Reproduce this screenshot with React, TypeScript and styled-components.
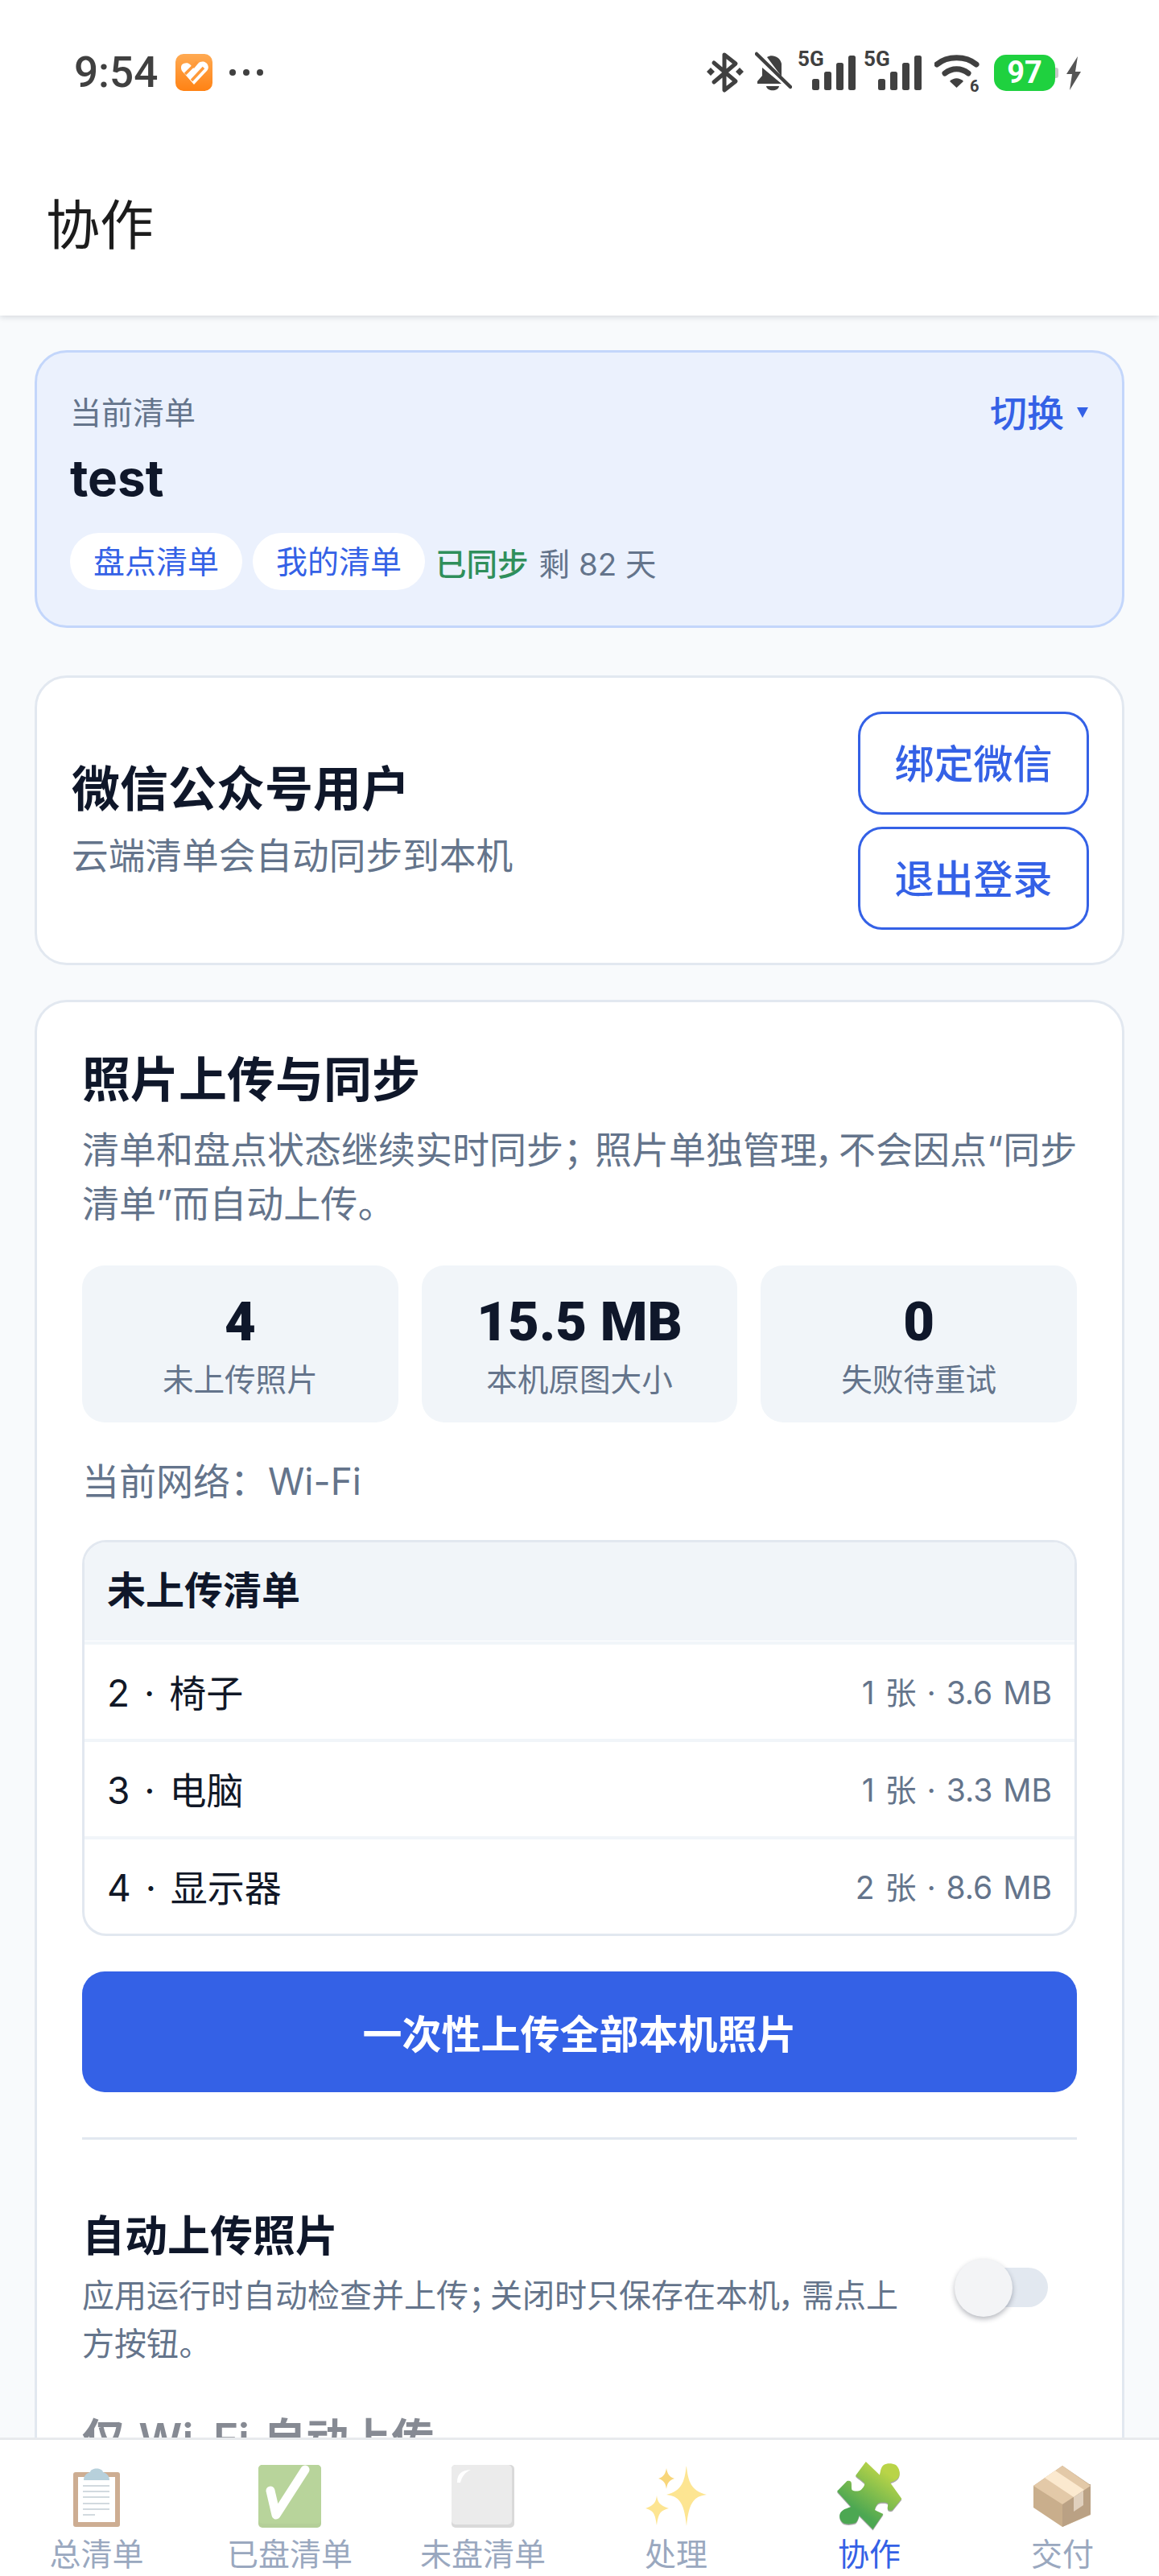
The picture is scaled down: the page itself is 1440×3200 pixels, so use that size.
import React from 'react'
import styled, { createGlobalStyle } from 'styled-components'

const GlobalStyle = createGlobalStyle`
  html, body { margin: 0; padding: 0; background: #fff; }
  * { box-sizing: border-box; }
  body {
    font-family: Inter, "Noto Sans CJK SC", sans-serif;
    font-feature-settings: "palt";
  }
`

const BLUE = '#3461e6'
const INK = '#0f172a'
const SLATE = '#64748b'
const LINE = '#e2e8f0'

const Screen = styled.div`
  width: 1440px;
  height: 3200px;
  display: flex;
  flex-direction: column;
  overflow: hidden;
  background: #f8fafc;
`

const TopArea = styled.header`
  height: 392px;
  flex: none;
  background: #fff;
  box-shadow: 0 2px 7px rgba(15, 23, 42, 0.14);
  position: relative;
  z-index: 2;
`

const StatusBar = styled.div`
  height: 232px;
  padding: 60px 96px 0 92px;
  display: flex;
  justify-content: space-between;
  align-items: flex-start;
  color: #404040;
`

const StatusLeft = styled.div`
  display: flex;
  align-items: center;
  height: 60px;
`

const Clock = styled.span`
  font-family: Roboto, sans-serif;
  font-size: 53px;
  line-height: 60px;
  font-weight: 500;
  width: 126px;
`

const MoreDots = styled.div`
  display: flex;
  gap: 9px;
  margin-left: 21px;
  span {
    width: 8px;
    height: 8px;
    border-radius: 50%;
    background: #404040;
  }
`

const StatusRight = styled.div`
  display: flex;
  align-items: flex-start;
  height: 60px;
`

const StatusSvg = styled.svg<{ $left?: number; $top?: number }>`
  flex: none;
  margin-left: ${p => p.$left ?? 0}px;
  margin-top: ${p => p.$top ?? 0}px;
`

const Battery = styled.div`
  width: 76px;
  height: 45px;
  margin: 8px 0 0 16px;
  border-radius: 15px;
  background: #1fd13f;
  color: #fff;
  font-family: Roboto, sans-serif;
  font-weight: 700;
  font-size: 38px;
  line-height: 45px;
  text-align: center;
  position: relative;
  &::after {
    content: '';
    position: absolute;
    right: -4px;
    top: 16px;
    width: 4px;
    height: 13px;
    border-radius: 0 3px 3px 0;
    background: #c8c8c8;
  }
`

const PageTitle = styled.h1`
  margin: 0;
  padding-left: 57px;
  font-size: 67px;
  line-height: 96px;
  font-weight: 400;
  color: #1c1c1c;
`

const Main = styled.main`
  flex: 1;
  min-height: 0;
  overflow: hidden;
  padding: 43px 43px 0;
  display: flex;
  flex-direction: column;
`

const ListCard = styled.section`
  flex: none;
  height: 345px;
  padding: 42px 41px 0;
  border: 3px solid #c3d6fb;
  border-radius: 40px;
  background: #ebf1fd;
`

const ListCardTop = styled.div`
  display: flex;
  justify-content: space-between;
  align-items: center;
  height: 60px;
`

const MutedLabel = styled.span`
  font-size: 39px;
  color: ${SLATE};
`

const SwitchLink = styled.span`
  display: flex;
  align-items: center;
  gap: 16px;
  margin-right: 1px;
  font-size: 46px;
  font-weight: 500;
  color: ${BLUE};
  i {
    width: 0;
    height: 0;
    margin-top: 4px;
    border-style: solid;
    border-width: 13px 7px 0;
    border-color: ${BLUE} transparent transparent;
  }
`

const ListName = styled.div`
  margin-top: 15px;
  font-size: 62px;
  line-height: 78px;
  font-weight: 700;
  color: ${INK};
`

const TagRow = styled.div`
  margin-top: 29px;
  display: flex;
  align-items: center;
  gap: 13px;
`

const Pill = styled.span`
  height: 71px;
  line-height: 71px;
  padding: 0 29px;
  border-radius: 36px;
  background: #fff;
  font-size: 39px;
  color: ${BLUE};
`

const SyncState = styled.span`
  font-size: 38.500px;
  font-weight: 500;
  color: #2f8f5b;
`

const DaysLeft = styled.span`
  font-size: 38.500px;
  color: ${SLATE};
`

const Card = styled.section`
  flex: none;
  background: #fff;
  border: 3px solid ${LINE};
  border-radius: 40px;
`

const AccountCard = styled(Card)`
  height: 360px;
  margin-top: 59px;
  padding: 42px 41px 0 43px;
  display: flex;
  justify-content: space-between;
`

const AccountText = styled.div`
  padding-top: 58px;
`

const AccountName = styled.div`
  font-size: 60px;
  line-height: 76px;
  font-weight: 600;
  color: ${INK};
`

const AccountHint = styled.div`
  margin-top: 16px;
  font-size: 45.700px;
  line-height: 60px;
  color: ${SLATE};
`

const ButtonStack = styled.div`
  display: flex;
  flex-direction: column;
  gap: 15px;
`

const OutlineButton = styled.button`
  width: 287px;
  height: 128px;
  padding: 0 0 6px;
  border: 3px solid ${BLUE};
  border-radius: 30px;
  background: #fff;
  color: ${BLUE};
  font: inherit;
  font-size: 49px;
  font-weight: 500;
`

const PhotoCard = styled(Card)`
  margin-top: 43px;
  padding: 58px 56px 0;
  border-bottom: 0;
  border-radius: 40px 40px 0 0;
  flex: 1;
  overflow: hidden;
`

const SectionTitle = styled.h2`
  margin: 0;
  font-size: 60px;
  line-height: 76px;
  font-weight: 600;
  color: ${INK};
`

const SectionText = styled.p`
  margin: 16px 0 0;
  font-size: 46px;
  line-height: 67px;
  white-space: nowrap;
  color: ${SLATE};
`

/* punctuation in the reference sits wider than proportional CJK marks */
const Mark = styled.span<{ $extra: number }>`
  padding-right: ${p => p.$extra}px;
`

const StatGrid = styled.div`
  margin-top: 43px;
  display: grid;
  grid-template-columns: repeat(3, 1fr);
  gap: 29px;
`

const StatBox = styled.div`
  height: 195px;
  border-radius: 28px;
  background: #f1f5f9;
  text-align: center;
  padding-top: 32px;
`

const StatValue = styled.div`
  font-family: Roboto, sans-serif;
  font-size: 67px;
  line-height: 76px;
  font-weight: 900;
  color: ${INK};
`

const StatLabel = styled.div`
  margin-top: 6px;
  font-size: 38.600px;
  line-height: 56px;
  color: ${SLATE};
`

const NetworkLine = styled.div`
  margin-top: 40px;
  font-size: 46px;
  line-height: 66px;
  color: ${SLATE};
`

const PendingTable = styled.div`
  margin-top: 40px;
  border: 3px solid ${LINE};
  border-radius: 30px;
  overflow: hidden;
`

const PendingHead = styled.div`
  height: 122px;
  margin-bottom: 1px;
  line-height: 120px;
  padding-left: 28px;
  background: #f1f5f9;
  font-size: 48px;
  font-weight: 600;
  color: ${INK};
`

const PendingRow = styled.div`
  height: 121px;
  padding: 0 28px 4px;
  border-top: 4px solid #f1f5f9;
  display: flex;
  justify-content: space-between;
  align-items: center;
  font-size: 46px;
  word-spacing: 5px;
  color: #111827;
`

const PendingMeta = styled.span`
  font-size: 39px;
  word-spacing: 2px;
  color: ${SLATE};
`

const PrimaryButton = styled.button`
  display: block;
  width: 100%;
  height: 150px;
  margin-top: 44px;
  padding: 0 0 2px;
  border: 0;
  border-radius: 28px;
  background: ${BLUE};
  color: #fff;
  font: inherit;
  font-size: 49px;
  font-weight: 600;
`

const Divider = styled.hr`
  margin: 56px 0 0;
  border: 0;
  height: 3px;
  background: ${LINE};
`

const SettingRow = styled.div<{ $dim?: boolean; $top: number }>`
  margin-top: ${p => p.$top}px;
  display: flex;
  justify-content: space-between;
  align-items: center;
  opacity: ${p => (p.$dim ? 0.5 : 1)};
`

const SettingText = styled.div`
  width: 1030px;
`

const SettingTitle = styled.div`
  font-size: 53px;
  line-height: 72px;
  font-weight: 600;
  word-spacing: 4px;
  color: ${INK};
`

const SettingHint = styled.div`
  margin-top: 8px;
  font-size: 40px;
  line-height: 60px;
  white-space: nowrap;
  color: ${SLATE};
`

const Toggle = styled.div`
  width: 116px;
  height: 72px;
  margin: 0 36px 0 0;
  position: relative;
  &::before {
    content: '';
    position: absolute;
    left: 56px;
    top: 11px;
    width: 60px;
    height: 49px;
    border-radius: 0 25px 25px 0;
    background: ${LINE};
  }
  &::after {
    content: '';
    position: absolute;
    left: 0;
    top: 0;
    width: 72px;
    height: 72px;
    border-radius: 50%;
    background: #f3f4f6;
    box-shadow: 0 3px 6px rgba(15, 23, 42, 0.3);
  }
`

const TabBar = styled.nav`
  flex: none;
  height: 172px;
  border-top: 3px solid #e8eaed;
  background: #fff;
  display: grid;
  grid-template-columns: repeat(6, 1fr);
  position: relative;
  z-index: 2;
`

const Tab = styled.div<{ $active?: boolean }>`
  display: flex;
  flex-direction: column;
  align-items: center;
  padding-top: 28px;
  font-size: 39px;
  line-height: 48px;
  color: ${p => (p.$active ? BLUE : '#9aa8bf')};
`

const TabIcon = styled.div`
  height: 84px;
  margin-bottom: 6px;
  display: flex;
  align-items: center;
  justify-content: center;
`

const AppLogo = () => (
  <svg width="46" height="46" viewBox="0 0 46 46">
    <defs>
      <linearGradient id="logoFill" x1="0" y1="0" x2="0" y2="1">
        <stop offset="0" stopColor="#ffaa52" />
        <stop offset="1" stopColor="#ff8214" />
      </linearGradient>
    </defs>
    <rect width="46" height="46" rx="10" fill="url(#logoFill)" />
    <path d="M23 38 8 21c-2-4-1-8 2-9s6-1 8 1l5 5 5-6c3-3 7-3 10-1s4 7 1 10z" fill="#fff" />
    <path d="M12 25 27 10M20 33 35 17" stroke="#ff9a3a" strokeWidth="3.400" fill="none" />
  </svg>
)

const BluetoothIcon = () => (
  <StatusSvg width="46" height="52" viewBox="0 0 46 52" $top={4}>
    <path d="M9 14 36 37 22 48V4l14 11L9 38" fill="none" stroke="#404040" strokeWidth="5" strokeLinejoin="round" strokeLinecap="round" />
    <path d="M5 20l5 5-5 5-5-5zM41 20l5 5-5 5-5-5z" fill="#404040" />
  </StatusSvg>
)

const BellOffIcon = () => (
  <StatusSvg width="46" height="52" viewBox="0 0 46 52" $left={14} $top={4}>
    <path d="M15 7c6-4 16-1 18 8v16zM9 20v10l-6 7v3h30z" fill="#404040" />
    <path d="M14 43h16c-1 7-15 7-16 0z" fill="#404040" />
    <path d="M2 3 44 44" stroke="#404040" strokeWidth="4.500" strokeLinecap="round" />
  </StatusSvg>
)

// svg is taller than the bars so the 5G label's box stays inside it
const SignalIcon = ({ left }: { left: number }) => (
  <StatusSvg width="72" height="62" viewBox="0 -8 72 62" $left={left} $top={-6}>
    <text x="0" y="20" fontFamily="Roboto, sans-serif" fontSize="26" fontWeight="700" fill="#404040">5G</text>
    <rect x="18" y="36" width="9" height="14" rx="2.500" fill="#404040" />
    <rect x="33" y="27" width="9" height="23" rx="2.500" fill="#404040" />
    <rect x="48" y="16" width="9" height="34" rx="2.500" fill="#404040" />
    <rect x="63" y="7" width="9" height="43" rx="2.500" fill="#404040" />
  </StatusSvg>
)

const WifiIcon = () => (
  <StatusSvg width="58" height="60" viewBox="0 0 58 60" $left={16} $top={3}>
    <path d="M3 17C16 6 39 6 52 17" fill="none" stroke="#404040" strokeWidth="7" strokeLinecap="round" />
    <path d="M13 28c9-7 20-7 29 0" fill="none" stroke="#404040" strokeWidth="7" strokeLinecap="round" />
    <path d="M19 38c5-5 12-5 17 0l-8.500 8z" fill="#404040" />
    <text x="44" y="51" fontFamily="Roboto, sans-serif" fontSize="20" fontWeight="700" fill="#404040">6</text>
  </StatusSvg>
)

const BoltIcon = () => (
  <StatusSvg width="20" height="42" viewBox="0 0 20 42" $left={13} $top={10}>
    <path d="M15 0 1 22h7L5 42l14-23h-7z" fill="#555" />
  </StatusSvg>
)

const ClipboardEmoji = () => (
  <svg width="58" height="76" viewBox="0 0 58 76" opacity="0.55">
    <rect y="8" width="58" height="68" rx="3" fill="#a56b3a" />
    <rect x="6" y="14" width="46" height="56" fill="#fff" />
    {[24, 31, 38, 46, 53].map(y => (
      <rect key={y} x="12" y={y} width="33" height="2" fill="#aebcc6" />
    ))}
    <rect x="12" y="60" width="15" height="2" fill="#aebcc6" />
    <path d="M13 18c0-6 4-9 8-10 1-6 15-6 16 0 4 1 8 4 8 10z" fill="#7eaabf" />
  </svg>
)

const CheckEmoji = () => (
  <svg width="78" height="78" viewBox="0 0 78 78" opacity="0.55">
    <rect width="78" height="78" rx="5" fill="#78a944" />
    <rect width="78" height="73" rx="5" fill="#7fb24a" />
    <path d="M15 32l7 30 36-56" fill="none" stroke="#fff" strokeWidth="11" strokeLinecap="round" strokeLinejoin="round" />
  </svg>
)

const EmptyEmoji = () => (
  <svg width="78" height="78" viewBox="0 0 78 78">
    <rect width="78" height="78" rx="5" fill="#d9d9d9" />
    <rect width="75" height="74" rx="5" fill="#ebebeb" />
    <path d="M7 22c0-10 4-15 17-16-7 3-11 8-13 16z" fill="#fff" />
  </svg>
)

const SparkleEmoji = () => (
  <svg width="76" height="74" viewBox="0 0 76 74">
    <path d="M51 0c2 18 5 30 25 35-15 2-22 8-25 39-3-31-10-37-25-39 20-5 23-17 25-39z" fill="#fde592" />
    <path d="M26 2c1 6 3 11 10 13-7 2-9 6-10 13-1-7-3-11-10-13 7-2 9-7 10-13z" fill="#f8d67a" />
    <path d="M14 36c1 8 3 12 15 16-12 3-13 8-15 21-2-13-3-18-14-21 11-4 13-8 14-16z" fill="#fde592" />
  </svg>
)

const PuzzleEmoji = () => (
  <svg width="81" height="86" viewBox="0 0 81 86">
    <defs>
      <linearGradient id="puzzleFill" x1="0.75" y1="0.15" x2="0.35" y2="0.75">
        <stop offset="0" stopColor="#b9d448" />
        <stop offset="1" stopColor="#4ca752" />
      </linearGradient>
      <path
        id="puzzleShape"
        d="M35.800 0 53 16.500C54 13 54 7 58 4c4-2.500 10-2.500 15 0 5 4 6 12 3 16-2 3-7 5-10 6l14.300 20L69 60c-2 1-5 1-6-1-1-3 1-5 0-7.300-2-1.500-9-1.700-12 0-3 3-4 6-4 8.300 3 2 7 3 10.400 5L44.500 84 27.500 66.700c-1 4-2 7-4.500 9.300-4 1.500-10 2-14 .7-4-2-6-6-5.800-10 .5-4 4-7 8.300-8.400 2-1 4-1.500 5.900-2.300L0 36.700 12.400 24c2-.5 4 0 5 1 1 3 0 7 1 10 3 2 8 2 11.400 0 2-2 4.500-5 4.600-8.300-3-3-8-6-11.400-9.400z"
      />
    </defs>
    <use href="#puzzleShape" x="0" y="1.500" fill="#a8a8a8" />
    <use href="#puzzleShape" fill="url(#puzzleFill)" />
  </svg>
)

const BoxEmoji = () => (
  <svg width="72" height="76" viewBox="0 0 72 76">
    <path d="M36 0 71 24v37L36 76 0 52V25z" fill="#c9ae8c" />
    <path d="M36 76V30l35-7v37z" fill="#baa184" />
    <path d="M36 0 71 25 36 48 0 25z" fill="#e3c9a8" />
    <path d="M14 15 50 39l13-9-36-24z" fill="#fbe9cf" />
    <path d="M50 39l12-8v18l-12 8z" fill="#e0d0bd" />
  </svg>
)

const pendingItems = [
  { name: '2 · 椅子', meta: '1 张 · 3.6 MB' },
  { name: '3 · 电脑', meta: '1 张 · 3.3 MB' },
  { name: '4 · 显示器', meta: '2 张 · 8.6 MB' },
]

const stats = [
  { value: '4', label: '未上传照片' },
  { value: '15.5 MB', label: '本机原图大小' },
  { value: '0', label: '失败待重试' },
]

const tabs = [
  { label: '总清单', icon: <ClipboardEmoji /> },
  { label: '已盘清单', icon: <CheckEmoji /> },
  { label: '未盘清单', icon: <EmptyEmoji /> },
  { label: '处理', icon: <SparkleEmoji /> },
  { label: '协作', icon: <PuzzleEmoji />, active: true },
  { label: '交付', icon: <BoxEmoji /> },
]

const App: React.FC = () => {
  return (
    <Screen>
      <GlobalStyle />
      <TopArea>
        <StatusBar>
          <StatusLeft>
            <Clock>9:54</Clock>
            <AppLogo />
            <MoreDots>
              <span />
              <span />
              <span />
            </MoreDots>
          </StatusLeft>
          <StatusRight>
            <BluetoothIcon />
            <BellOffIcon />
            <SignalIcon left={7} />
            <SignalIcon left={10} />
            <WifiIcon />
            <Battery>97</Battery>
            <BoltIcon />
          </StatusRight>
        </StatusBar>
        <PageTitle>协作</PageTitle>
      </TopArea>
      <Main>
        <ListCard>
          <ListCardTop>
            <MutedLabel>当前清单</MutedLabel>
            <SwitchLink>
              切换<i />
            </SwitchLink>
          </ListCardTop>
          <ListName>test</ListName>
          <TagRow>
            <Pill>盘点清单</Pill>
            <Pill>我的清单</Pill>
            <SyncState>已同步</SyncState>
            <DaysLeft>剩 82 天</DaysLeft>
          </TagRow>
        </ListCard>
        <AccountCard>
          <AccountText>
            <AccountName>微信公众号用户</AccountName>
            <AccountHint>云端清单会自动同步到本机</AccountHint>
          </AccountText>
          <ButtonStack>
            <OutlineButton>绑定微信</OutlineButton>
            <OutlineButton>退出登录</OutlineButton>
          </ButtonStack>
        </AccountCard>
        <PhotoCard>
          <SectionTitle>照片上传与同步</SectionTitle>
          <SectionText>
            清单和盘点状态继续实时同步<Mark $extra={16}>；</Mark>照片单独管理<Mark $extra={4}>，</Mark>不会因点“同步
            <br />
            清单”而自动上传。
          </SectionText>
          <StatGrid>
            {stats.map(s => (
              <StatBox key={s.label}>
                <StatValue>{s.value}</StatValue>
                <StatLabel>{s.label}</StatLabel>
              </StatBox>
            ))}
          </StatGrid>
          <NetworkLine>
            当前网络<Mark $extra={24}>：</Mark>Wi-Fi
          </NetworkLine>
          <PendingTable>
            <PendingHead>未上传清单</PendingHead>
            {pendingItems.map(item => (
              <PendingRow key={item.name}>
                <span>{item.name}</span>
                <PendingMeta>{item.meta}</PendingMeta>
              </PendingRow>
            ))}
          </PendingTable>
          <PrimaryButton>一次性上传全部本机照片</PrimaryButton>
          <Divider />
          <SettingRow $top={84}>
            <SettingText>
              <SettingTitle>自动上传照片</SettingTitle>
              <SettingHint>
                应用运行时自动检查并上传<Mark $extra={7}>；</Mark>关闭时只保存在本机<Mark $extra={7}>，</Mark>需点上
                <br />
                方按钮。
              </SettingHint>
            </SettingText>
            <Toggle />
          </SettingRow>
          <SettingRow $dim $top={52}>
            <SettingText>
              <SettingTitle>仅 Wi-Fi 自动上传</SettingTitle>
            </SettingText>
          </SettingRow>
        </PhotoCard>
      </Main>
      <TabBar>
        {tabs.map(t => (
          <Tab key={t.label} $active={t.active}>
            <TabIcon>{t.icon}</TabIcon>
            {t.label}
          </Tab>
        ))}
      </TabBar>
    </Screen>
  )
}

export default App
